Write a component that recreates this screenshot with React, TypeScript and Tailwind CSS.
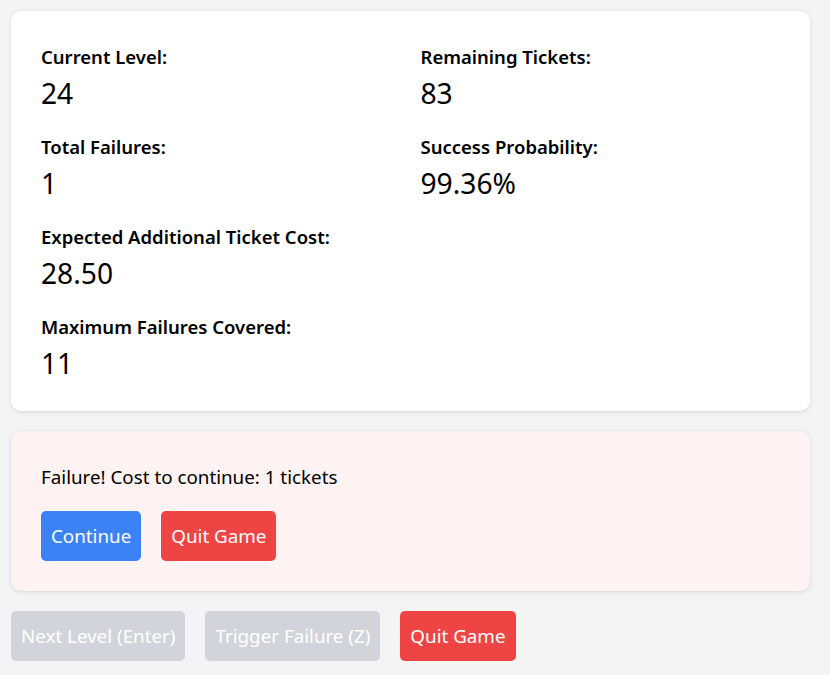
import React from "react";

const Stat = ({ label, value }: { label: string; value: string }) => (
  <div className="flex flex-col">
    <div className="text-[18.5px] leading-[25px] font-semibold text-black pt-[3px] mb-[4px]">{label}</div>
    <div className="text-[28.2px] leading-[40px] text-black">{value}</div>
  </div>
);

export default function App() {
  return (
    <div
      className="min-h-screen bg-[#f3f4f6] pt-[11px] pl-[11px]"
      style={{ fontFamily: '"Noto Sans", "Open Sans", sans-serif' }}
    >
      <div className="w-[799px]">
        <div className="bg-white rounded-[10px] shadow-[0_1px_4px_rgba(0,0,0,0.12)] px-[30px] pt-[30px] pb-[28px] mb-[20px]">
          <div className="grid grid-cols-2 gap-x-[20px] gap-y-[18px]">
            <Stat label="Current Level:" value="24" />
            <Stat label="Remaining Tickets:" value="83" />
            <Stat label="Total Failures:" value="1" />
            <Stat label="Success Probability:" value="99.36%" />
            <Stat label="Expected Additional Ticket Cost:" value="28.50" />
            <div />
            <Stat label="Maximum Failures Covered:" value="11" />
          </div>
        </div>
        <div className="bg-[#fef2f2] rounded-[10px] shadow-[0_1px_4px_rgba(0,0,0,0.12)] p-[30px] mb-[20px]">
          <p className="text-[18.8px] leading-[30px] text-black mb-[19px] pt-[1px]">
            Failure! Cost to continue: 1 tickets
          </p>
          <div className="flex gap-[20px]">
            <button className="bg-[#3b82f6] text-white text-[18.8px] leading-[30px] px-[10px] py-[10px] rounded-[5px]">
              Continue
            </button>
            <button className="bg-[#ef4444] text-white text-[18.8px] leading-[30px] px-[10px] py-[10px] rounded-[5px]">
              Quit Game
            </button>
          </div>
        </div>
        <div className="flex gap-[20px]">
          <button className="bg-[#d1d5db] text-white text-[18.8px] leading-[30px] px-[10px] py-[10px] rounded-[5px]">
            Next Level (Enter)
          </button>
          <button className="bg-[#d1d5db] text-white text-[18.8px] leading-[30px] px-[10px] py-[10px] rounded-[5px]">
            Trigger Failure (Z)
          </button>
          <button className="bg-[#ef4444] text-white text-[18.8px] leading-[30px] px-[10px] py-[10px] rounded-[5px]">
            Quit Game
          </button>
        </div>
      </div>
    </div>
  );
}
